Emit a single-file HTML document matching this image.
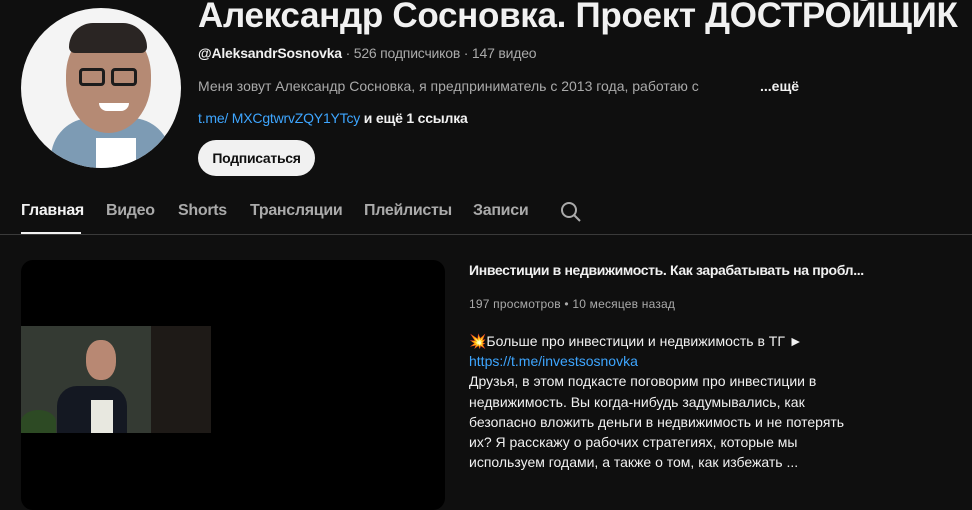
<!DOCTYPE html>
<html><head><meta charset="utf-8"><style>
*{margin:0;padding:0;box-sizing:border-box}
body{width:972px;height:496px;background:#0f0f0f;overflow:hidden;position:relative;font-family:"Liberation Sans","Noto Sans CJK SC",sans-serif;color:#f1f1f1}
.a{position:absolute;white-space:nowrap}
.t{font-size:14px;letter-spacing:0}
.g{color:#aaa}
.b{color:#3ea6ff}
</style></head><body>
<div class="a" style="left:21px;top:8px;width:160px;height:160px;border-radius:50%;background:#f4f4f4;overflow:hidden">
 <div class="a" style="left:30px;top:110px;width:120px;height:70px;border-radius:40px 40px 0 0;background:#7d9bb4"></div>
 <div class="a" style="left:75px;top:130px;width:40px;height:40px;background:#fff"></div>
 <div class="a" style="left:45px;top:20px;width:85px;height:105px;border-radius:45% 45% 50% 50%;background:#b58a74"></div>
 <div class="a" style="left:48px;top:15px;width:78px;height:30px;border-radius:40px 40px 10px 10px;background:#2a2523"></div>
 <div class="a" style="left:58px;top:60px;width:26px;height:18px;border:3px solid #1c1c1c;border-radius:4px"></div>
 <div class="a" style="left:90px;top:60px;width:26px;height:18px;border:3px solid #1c1c1c;border-radius:4px"></div>
 <div class="a" style="left:78px;top:95px;width:30px;height:8px;border-radius:0 0 10px 10px;background:#fff"></div>
</div>
<div class="a" style="left:198px;top:-4px;font-size:35px;font-weight:bold;letter-spacing:-0.3px">Александр Сосновка. Проект ДОСТРОЙЩИК</div>
<div class="a t g" style="left:198px;top:45px;letter-spacing:-0.2px"><span style="color:#f1f1f1;font-weight:bold">@AleksandrSosnovka</span> · 526 подписчиков · 147 видео</div>
<div class="a t g" style="left:198px;top:78px;letter-spacing:0px">Меня зовут Александр Сосновка, я предприниматель с 2013 года, работаю с</div>
<div class="a t" style="left:760px;top:78px;font-weight:bold">...ещё</div>
<div class="a t" style="left:198px;top:110px;letter-spacing:-0.2px"><span class="b">t.me/ MXCgtwrvZQY1YTcy</span> <b>и ещё 1 ссылка</b></div>
<div class="a" style="left:198px;top:140px;width:117px;height:36px;border-radius:18px;background:#f1f1f1;color:#0f0f0f;font-size:14px;font-weight:bold;text-align:center;line-height:36px;letter-spacing:-0.3px">Подписаться</div>
<div class="a" style="left:21px;top:202px;font-size:16px;font-weight:bold;letter-spacing:-0.3px">Главная</div>
<div class="a" style="left:106px;top:202px;font-size:16px;font-weight:bold;color:#aaa;letter-spacing:-0.3px">Видео</div>
<div class="a" style="left:178px;top:202px;font-size:16px;font-weight:bold;color:#aaa;letter-spacing:-0.3px">Shorts</div>
<div class="a" style="left:250px;top:202px;font-size:16px;font-weight:bold;color:#aaa;letter-spacing:-0.3px">Трансляции</div>
<div class="a" style="left:364px;top:202px;font-size:16px;font-weight:bold;color:#aaa;letter-spacing:-0.3px">Плейлисты</div>
<div class="a" style="left:473px;top:202px;font-size:16px;font-weight:bold;color:#aaa;letter-spacing:-0.3px">Записи</div>
<svg class="a" style="left:559px;top:200px" width="24" height="24" viewBox="0 0 24 24"><circle cx="10" cy="10" r="7" fill="none" stroke="#aaa" stroke-width="2"/><path d="M15 15l6 6" stroke="#aaa" stroke-width="2"/></svg>
<div class="a" style="left:21px;top:232px;width:60px;height:2px;background:#f1f1f1"></div>
<div class="a" style="left:0;top:234px;width:972px;height:1px;background:#3a3a3a"></div>
<div class="a" style="left:21px;top:260px;width:424px;height:250px;border-radius:12px;background:#000;overflow:hidden">
 <div class="a" style="left:0;top:66px;width:190px;height:107px;background:#343a33"></div>
 <div class="a" style="left:130px;top:66px;width:60px;height:107px;background:#1e1a17"></div>
 <div class="a" style="left:36px;top:126px;width:70px;height:47px;border-radius:20px 20px 0 0;background:#141822"></div>
 <div class="a" style="left:70px;top:140px;width:22px;height:33px;background:#e8e8e0"></div>
 <div class="a" style="left:65px;top:80px;width:30px;height:40px;border-radius:45%;background:#b88873"></div>
 <div class="a" style="left:0;top:150px;width:35px;height:23px;background:#2d4a24;border-radius:50% 50% 0 0"></div>
</div>
<div class="a t" style="left:469px;top:262px;font-weight:bold;letter-spacing:-0.35px">Инвестиции в недвижимость. Как зарабатывать на пробл...</div>
<div class="a g" style="left:469px;top:297px;font-size:12px;letter-spacing:0.2px">197 просмотров • 10 месяцев назад</div>
<div class="a t" style="left:469px;top:331px;line-height:20.2px">💥Больше про инвестиции и недвижимость в ТГ ►<br><span class="b">https://t.me/investsosnovka</span><br>Друзья, в этом подкасте поговорим про инвестиции в<br>недвижимость. Вы когда-нибудь задумывались, как<br>безопасно вложить деньги в недвижимость и не потерять<br>их? Я расскажу о рабочих стратегиях, которые мы<br>используем годами, а также о том, как избежать ...</div>
</body></html>
